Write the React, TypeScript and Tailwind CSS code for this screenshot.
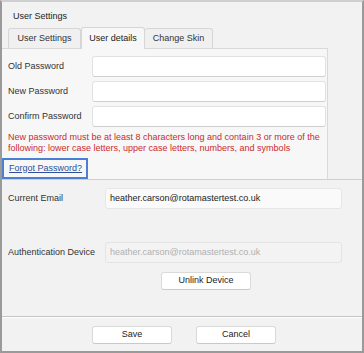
import React from 'react';

const font = { fontFamily: '"Liberation Sans", Arial, sans-serif' };

const Field: React.FC<{ label: string; labelW: string; value?: string; disabled?: boolean; tint?: boolean }> = ({ label, labelW, value, disabled, tint }) => (
  <div className="flex items-center">
    <div className={`${labelW} pl-[6px] text-[9px] text-[#333]`}>{label}</div>
    <div
      className={`flex-1 h-[21px] rounded-[3px] border px-[4px] flex items-center text-[9px] ${
        disabled
          ? 'bg-[#f3f3f3] border-[#e4e4e4] text-[#b0b0b0]'
          : tint
          ? 'bg-[#fafafa] border-[#e6e6e6] text-[#222]'
          : 'bg-white border-[#e2e2e2] border-b-[#cfcfcf] text-[#222]'
      }`}
    >
      {value}
    </div>
  </div>
);

const Button: React.FC<{ children: React.ReactNode; w: string }> = ({ children, w }) => (
  <button className={`${w} h-[18px] bg-white border border-[#dadada] border-b-[#c9c9c9] rounded-[3px] text-[9px] text-[#222]`}>
    {children}
  </button>
);

export default function App() {
  return (
    <div style={font} className="w-[364px] h-[353px] bg-[#f2f2f2] border-2 border-t-[#cfcfcf] border-x-[#9a9a9a] border-b-[#9a9a9a] flex flex-col overflow-hidden">
      <div className="pl-[11px] pt-[8px] h-[24px] text-[9px] text-[#222]">User Settings</div>

      <div className="flex items-end pl-[6px] h-[22px]">
        <div className="w-[73px] h-[20px] border border-b-0 border-[#d6d6d6] rounded-t-[3px] bg-[#f0f0f0] flex items-center justify-center text-[9px] text-[#333]">User Settings</div>
        <div className="w-[64px] h-[22px] -mb-px border border-b-0 border-[#d6d6d6] rounded-t-[3px] bg-[#f7f7f7] flex items-center justify-center text-[9px] text-[#222] relative z-10">User details</div>
        <div className="w-[68px] h-[20px] border border-b-0 border-l-0 border-[#d6d6d6] rounded-t-[3px] bg-[#f0f0f0] flex items-center justify-center text-[9px] text-[#333]">Change Skin</div>
      </div>

      <div className="flex border-b border-[#cfcfcf]">
        <div className="w-[326px] h-[131px] border-t border-r border-[#d9d9d9] bg-[#f7f7f7] pt-[7px] flex flex-col">
          <div className="flex flex-col gap-[4px] pr-[1px]">
            <Field label="Old Password" labelW="w-[90px]" />
            <Field label="New Password" labelW="w-[90px]" />
            <Field label="Confirm Password" labelW="w-[90px]" />
          </div>
          <div className="pl-[6px] pt-[5px] text-[9px] leading-[10.5px] text-[#cc2a2e]">
            New password must be at least 8 characters long and contain 3 or more of the following: lower case letters, upper case letters, numbers, and symbols
          </div>
          <div className="mt-[5px] w-[86px] h-[21px] border-2 border-[#4a7fd4] flex items-center pl-[5px]">
            <span className="text-[9px] text-[#2f4f9a] underline">Forgot Password?</span>
          </div>
        </div>
        <div className="flex-1" />
      </div>

      <div className="flex-1 flex flex-col pt-[8px] pr-[20px] border-b border-[#c4c4c4]">
        <Field label="Current Email" labelW="w-[103px]" value="heather.carson@rotamastertest.co.uk" tint />
        <div className="h-[33px]" />
        <Field label="Authentication Device" labelW="w-[103px]" value="heather.carson@rotamastertest.co.uk" disabled />
        <div className="flex justify-center pl-[68px] mt-[9px]">
          <Button w="w-[90px]">Unlink Device</Button>
        </div>
      </div>

      <div className="h-[34px] border-t border-white flex items-center justify-center gap-[24px] pl-[4px]">
        <Button w="w-[80px]">Save</Button>
        <Button w="w-[80px]">Cancel</Button>
      </div>
    </div>
  );
}
